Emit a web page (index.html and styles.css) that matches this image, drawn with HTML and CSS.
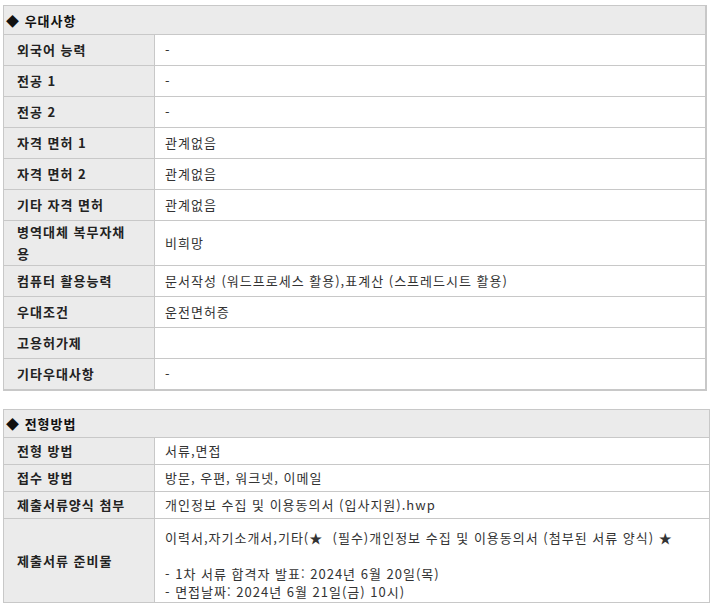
FILE: index.html
```html
<!DOCTYPE html>
<html lang="ko">
<head>
<meta charset="utf-8">
<title>우대사항 / 전형방법</title>
<link rel="stylesheet" href="styles.css">
</head>
<body>
<div class="page">
  <table class="info info-pref">
    <colgroup><col class="col-label"><col></colgroup>
    <tr><th class="sec" colspan="2">◆ 우대사항</th></tr>
    <tr><td class="lbl">외국어 능력</td><td class="val">-</td></tr>
    <tr><td class="lbl">전공 1</td><td class="val">-</td></tr>
    <tr><td class="lbl">전공 2</td><td class="val">-</td></tr>
    <tr><td class="lbl">자격 면허 1</td><td class="val">관계없음</td></tr>
    <tr><td class="lbl">자격 면허 2</td><td class="val">관계없음</td></tr>
    <tr><td class="lbl">기타 자격 면허</td><td class="val">관계없음</td></tr>
    <tr><td class="lbl">병역대체 복무자채용</td><td class="val">비희망</td></tr>
    <tr><td class="lbl">컴퓨터 활용능력</td><td class="val">문서작성 (워드프로세스 활용),표계산 (스프레드시트 활용)</td></tr>
    <tr><td class="lbl">우대조건</td><td class="val">운전면허증</td></tr>
    <tr><td class="lbl">고용허가제</td><td class="val"></td></tr>
    <tr><td class="lbl">기타우대사항</td><td class="val">-</td></tr>
  </table>

  <table class="info info-method">
    <colgroup><col class="col-label"><col></colgroup>
    <tr><th class="sec" colspan="2">◆ 전형방법</th></tr>
    <tr><td class="lbl">전형 방법</td><td class="val">서류,면접</td></tr>
    <tr><td class="lbl">접수 방법</td><td class="val">방문, 우편, 워크넷, 이메일</td></tr>
    <tr><td class="lbl">제출서류양식 첨부</td><td class="val">개인정보 수집 및 이용동의서 (입사지원).hwp</td></tr>
    <tr><td class="lbl">제출서류 준비물</td><td class="val val-multi">이력서,자기소개서,기타(★&nbsp; (필수)개인정보 수집 및 이용동의서 (첨부된 서류 양식) ★<br><br>- 1차 서류 합격자 발표: 2024년 6월 20일(목)<br>- 면접날짜: 2024년 6월 21일(금) 10시)</td></tr>
  </table>
</div>
</body>
</html>
```

FILE: styles.css
```css
html, body {
  margin: 0;
  padding: 0;
  background: #ffffff;
}

body {
  font-family: "Noto Sans CJK KR", "Noto Sans", sans-serif;
  font-size: 13px;
  color: #333333;
  letter-spacing: 1px;
}

.page {
  padding: 5px 0 0 3px;
}

.info {
  border-collapse: collapse;
  table-layout: fixed;
}

.info th,
.info td {
  border: 1px solid #c8c8c8;
  padding: 0;
  text-align: left;
  vertical-align: middle;
}

.info .sec {
  background: #ebebeb;
  font-weight: bold;
  color: #111111;
  padding-left: 2px;
}

.info .lbl {
  background: #ebebeb;
  font-weight: bold;
  color: #222222;
  padding-left: 13px;
  padding-right: 20px;
}

.info .val {
  background: #ffffff;
  padding-left: 10px;
  padding-right: 10px;
}

.col-label {
  width: 151px;
}

/* 우대사항 */
.info-pref {
  width: 704px;
  border-right: 2px solid #c8c8c8;
  border-bottom: 2px solid #c8c8c8;
}

.info-pref th {
  height: 27px;
  padding-top: 1px;
  line-height: 22px;
}

.info-pref td {
  height: 30px;
  line-height: 22px;
}

/* 전형방법 */
.info-method {
  width: 707px;
  margin-top: 18px;
}

.info-method th {
  height: 26px;
  padding-top: 1px;
  line-height: 18px;
}

.info-method td {
  height: 26px;
  line-height: 18px;
}

.info-method .val-multi {
  padding-top: 10px;
  padding-bottom: 1px;
}
```
